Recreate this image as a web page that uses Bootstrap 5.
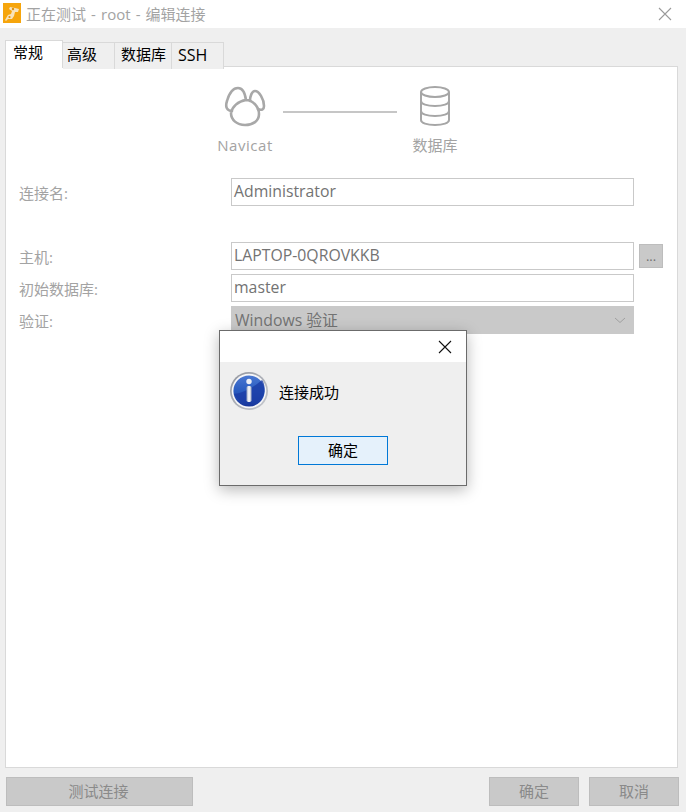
<!DOCTYPE html>
<html lang="zh">
<head>
<meta charset="utf-8">
<title>编辑连接</title>
<link rel="stylesheet" href="https://cdn.jsdelivr.net/npm/bootstrap@5.3.0/dist/css/bootstrap.min.css">
<style>
html,body{height:100%;margin:0}
body{background:#efefef;font-family:"Open Sans","Noto Sans CJK SC",sans-serif;font-size:15px;color:#000;overflow:hidden}
.win{width:686px;height:812px;position:relative}
.titlebar{height:28px;background:#fff;padding-left:3px;color:#a3a3a3;font-size:15px;gap:5px;word-spacing:1.2px}
.applogo{width:18px;height:20px;flex:none;margin-top:-2px}
.wclose{margin-left:auto;margin-right:14px;width:14px;height:14px}
.tabstrip{margin:12px 0 0 5px;height:27px;padding-left:0;border:0;flex-wrap:nowrap}
.tabstrip .tabcell{height:27px;margin-top:2px;background:#efefef;border:1px solid #d9d9d9;border-left:0;border-bottom:0;color:#000;font-size:15px;display:flex;align-items:center;padding:0 0 3px 4px}
.tabstrip .tabcell.on{height:28px;margin-top:0;background:#fff;border-left:1px solid #d9d9d9;width:58px;z-index:2;padding:0 0 4px 7px}
.tab1{width:52px}
.tab2{width:57px;padding-left:6px!important}
.tab3{width:52px;padding-left:6px!important;font-size:16px!important}
.panel-box{margin:-1px 8px 0 5px;height:702px;background:#fff;border:1px solid #d9d9d9;padding-top:15px;color:#a3a3a3}
.wizard{height:90px}
.wstep{width:80px;font-size:15px;color:#a3a3a3;line-height:20px}
.wlogo{display:block;margin:0 auto 5px}
.wdb{display:block;margin:2px auto 7px}
.wname{letter-spacing:.55px}
.wline{width:114px;height:2px;background:#c6c6c6;margin:29px 0 0 -2px;flex:none}
.wstep2{margin-left:-2px}
.frow{display:flex;align-items:center;padding-left:13px;margin-bottom:4px}
.flabel{width:212px;flex:none;font-size:15px;color:#a3a3a3;padding-top:1px;line-height:22px}
.finput{width:403px;height:28px;border:1px solid #c9c9c9;background:#fff;color:#737373;font-size:15.8px;padding:0 2px;line-height:25px;white-space:nowrap}
.finput.off{background:#c9c9c9;display:flex;align-items:center;justify-content:space-between;padding:0 3px}
.gapafter{margin-bottom:36px}
.dots{width:24px;height:24px;margin-left:5px;background:#c9c9c9;border:1px solid #bdbdbd;color:#6f6f6f;font-size:13px;line-height:22px;text-align:center;padding:0}
.bottombar{height:44px;padding:9px 7px 6px 6px}
.wbtn{background:#c9c9c9;border:1px solid #bdbdbd;color:#8a8a8a;height:29px;font-size:15px;padding:0;border-radius:0;line-height:25px}
.w187{width:187px;padding-right:2px}.w90{width:90px}.w91{width:90px;margin-left:10px}
.msgbox{position:absolute;left:219px;top:330px;width:248px;height:156px;background:#efefef;border:1px solid #6b6b6b;box-shadow:0 4px 14px rgba(0,0,0,.28)}
.msghead{height:31px;background:#fff;padding-right:14px}
.msgbody{padding:10px 10px 0;gap:11px;height:63px;font-size:15px}
.msgtext{margin-top:9px;line-height:22px}
.msgicon{flex:none}
.msgfoot{padding-top:11px}
.msgbtn{width:90px;height:29px;background:#e5f1fb;border:1px solid #0078d7;border-radius:0;font-size:15px;padding:0;color:#000;line-height:25px}
</style>
</head>
<body>
<div class="win">
  <div class="titlebar d-flex align-items-center">
    <svg class="applogo" viewBox="0 0 18 20"><rect width="18" height="20" fill="#f6a50c"/><path d="M2 17l3-5 3-1 1-3-3-2 1-2 5 1 4 1-1 3-3 0-1 4-2 3-4 0-2 2z" fill="#f8e3bb"/><circle cx="10" cy="6" r="1.2" fill="#dd9010"/><circle cx="6.500" cy="14" r="1.100" fill="#dd9010"/></svg>
    <span>正在测试 - root - 编辑连接</span>
    <svg class="wclose" viewBox="0 0 14 14"><path d="M1 1l12 12M13 1 1 13" stroke="#9a9a9a" stroke-width="1.1" fill="none"/></svg>
  </div>

  <div class="nav tabstrip d-flex">
    <div class="tabcell on">常规</div>
    <div class="tabcell tab1">高级</div>
    <div class="tabcell tab2">数据库</div>
    <div class="tabcell tab3">SSH</div>
  </div>

  <div class="panel-box">
    <div class="wizard d-flex">
      <div class="wstep text-center" style="margin-left:199px">
        <svg class="wlogo" width="50" height="48" viewBox="0 0 50 48" fill="none" stroke="#a8a8a8" stroke-width="2.600" stroke-linecap="round" stroke-linejoin="round">
          <path d="M12 29C7 29 5 25 7 19 9 12 13 6 18 6 23 6 25 11 26 18 33 18 39 25 39 32 39 39 33 43 25 43 17 43 11 38 11 31 12 25 18 19 26 18"/>
          <path d="M30 19C30 14 32 9 35 9 39 9 44 17 44 24 44 27 42 29 38 27"/>
        </svg>
        <span class="wname">Navicat</span>
      </div>
      <div class="wline"></div>
      <div class="wstep wstep2 text-center">
        <svg class="wdb" width="42" height="44" viewBox="0 0 42 44" fill="none" stroke="#a6a6a6" stroke-width="2"><ellipse cx="21" cy="8" rx="14" ry="5"/><path d="M7 8v28c0 3 6 5 14 5s14-2 14-5V8M7 17c0 3 6 5 14 5s14-2 14-5M7 27c0 3 6 5 14 5s14-2 14-5"/></svg>
        数据库
      </div>
    </div>
    <div class="frow gapafter" style="margin-top:6px">
      <div class="flabel">连接名:</div><div class="finput">Administrator</div>
    </div>
    <div class="frow">
      <div class="flabel">主机:</div><div class="finput">LAPTOP-0QROVKKB</div><button class="dots" type="button">...</button>
    </div>
    <div class="frow">
      <div class="flabel">初始数据库:</div><div class="finput">master</div>
    </div>
    <div class="frow">
      <div class="flabel">验证:</div>
      <div class="finput off"><span>Windows 验证</span><svg width="12" height="7" viewBox="0 0 12 7" class="me-1"><path d="M1 1l5 4.500 5-4.500" stroke="#a0a0a0" fill="none"/></svg></div>
    </div>
  </div>

  <div class="bottombar d-flex">
    <button class="btn wbtn w187" type="button">测试连接</button>
    <button class="btn wbtn w90 ms-auto" type="button">确定</button>
    <button class="btn wbtn w91" type="button">取消</button>
  </div>

  <div class="msgbox">
    <div class="msghead d-flex align-items-center justify-content-end">
      <svg width="14" height="14" viewBox="0 0 14 14"><path d="M1 1l12 12M13 1 1 13" stroke="#111" stroke-width="1.1" fill="none"/></svg>
    </div>
    <div class="msgbody d-flex align-items-start">
      <svg width="38" height="38" viewBox="0 0 38 38" class="msgicon">
        <defs><linearGradient id="blue" x1="0" y1="0" x2="0" y2="1"><stop offset="0" stop-color="#4a78d2"/><stop offset=".5" stop-color="#2a5cc0"/><stop offset="1" stop-color="#17349a"/></linearGradient><linearGradient id="st" x1="0" y1="0" x2="1" y2="0"><stop offset="0" stop-color="#9aa6c0"/><stop offset=".5" stop-color="#fff"/><stop offset="1" stop-color="#aab3c8"/></linearGradient><linearGradient id="rim" x1="0" y1="0" x2="1" y2="1"><stop offset="0" stop-color="#8f939c"/><stop offset="1" stop-color="#c9ccd2"/></linearGradient></defs>
        <circle cx="19" cy="19" r="19" fill="url(#rim)"/><circle cx="19" cy="19" r="17.300" fill="#f6f6f8"/><circle cx="19" cy="19" r="15.600" fill="url(#blue)"/>
        <path d="M4 22c9-1 19-6 28-14 3 3 4 13 0 18-7 8-22 7-28-4z" fill="#1c3da6" opacity=".8"/>
        <circle cx="19" cy="9.500" r="2.700" fill="#eef0f6"/><rect x="16.500" y="14" width="5" height="16" rx="1.800" fill="url(#st)"/>
      </svg>
      <span class="msgtext">连接成功</span>
    </div>
    <div class="msgfoot d-flex justify-content-center">
      <button class="btn msgbtn" type="button">确定</button>
    </div>
  </div>
</div>
<script src="https://cdn.jsdelivr.net/npm/bootstrap@5.3.0/dist/js/bootstrap.bundle.min.js"></script>
</body>
</html>
